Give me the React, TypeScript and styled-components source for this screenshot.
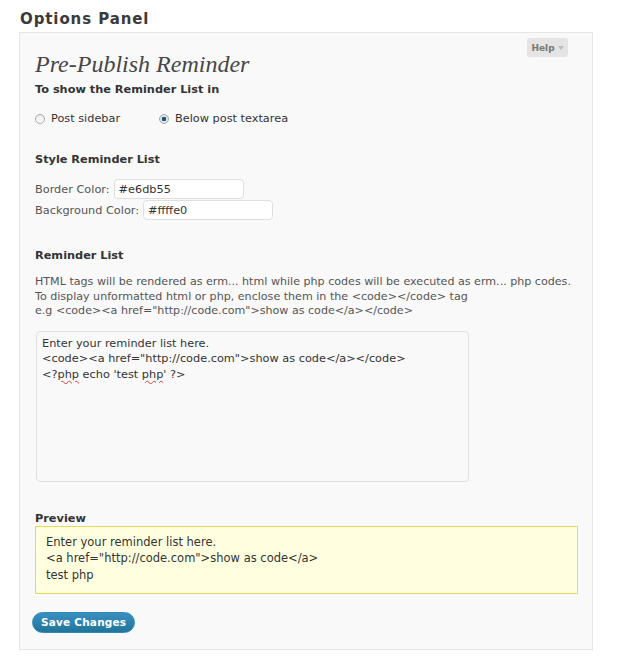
import React from "react";
import styled, { createGlobalStyle } from "styled-components";

const GlobalStyle = createGlobalStyle`
  body {
    margin: 0;
    background: #ffffff;
    font-family: "DejaVu Sans", Verdana, sans-serif;
    color: #333333;
  }
`;

const Page = styled.div`
  width: 620px;
  height: 666px;
  padding: 10px 0 0 19px;
  box-sizing: border-box;
`;

const PageTitle = styled.h2`
  margin: 0 0 0 1px;
  font-size: 15px;
  letter-spacing: 0.9px;
  line-height: 18px;
  font-weight: bold;
  color: #3a3a3a;
  height: 22px;
`;

const Panel = styled.div`
  position: relative;
  width: 574px;
  height: 618px;
  box-sizing: border-box;
  border: 1px solid #e6e6e6;
  background: #f9f9f9;
  padding: 16px 0 0 15px;
`;

const HelpTab = styled.div`
  position: absolute;
  top: 5px;
  right: 24px;
  width: 41px;
  height: 19px;
  box-sizing: border-box;
  background: #e4e4e4;
  border-radius: 3px;
  display: flex;
  align-items: center;
  justify-content: center;
  gap: 3px;
  font-size: 9px;
  font-weight: bold;
  color: #777777;
`;

const Arrow = styled.span`
  width: 0;
  height: 0;
  border-left: 3px solid transparent;
  border-right: 3px solid transparent;
  border-top: 4px solid #bbbbbb;
  margin-top: 1px;
`;

const Title = styled.h1`
  margin: 0;
  font-family: "Liberation Serif", Georgia, serif;
  font-style: italic;
  font-weight: normal;
  font-size: 24px;
  line-height: 30px;
  color: #464646;
`;

const Heading = styled.h3<{ $top: number }>`
  margin: ${(p) => p.$top}px 0 0 0;
  font-size: 11.3px;
  line-height: 14px;
  font-weight: bold;
  color: #333333;
`;

const RadioRow = styled.div`
  display: flex;
  align-items: center;
  margin-top: 15px;
  font-size: 11.3px;
  color: #333333;
`;

const RadioLabel = styled.label<{ $width: number }>`
  display: flex;
  align-items: center;
  gap: 6px;
  width: ${(p) => p.$width}px;
`;

const Radio = styled.span<{ $checked?: boolean }>`
  width: 10px;
  height: 10px;
  box-sizing: border-box;
  border-radius: 50%;
  border: 1px solid #a9a9a9;
  background: ${(p) =>
    p.$checked
      ? "radial-gradient(circle, #21587a 0 2px, #d8e4ec 2.5px)"
      : "linear-gradient(#e9e9e9, #ffffff)"};
`;

const FieldRow = styled.div<{ $top: number }>`
  display: flex;
  align-items: center;
  gap: 4px;
  margin-top: ${(p) => p.$top}px;
  font-size: 11.3px;
  color: #555555;
`;

const TextInput = styled.div`
  width: 130px;
  height: 20px;
  box-sizing: border-box;
  border: 1px solid #dfdfdf;
  border-radius: 4px;
  background: #ffffff;
  padding: 0 4px;
  display: flex;
  align-items: center;
  font-size: 11.3px;
  color: #333333;
`;

const Paragraph = styled.p`
  margin: 12px 0 0 0;
  font-size: 11.1px;
  line-height: 14.5px;
  color: #555555;
`;

const Textarea = styled.div`
  margin: 12px 0 0 1px;
  width: 433px;
  height: 151px;
  box-sizing: border-box;
  border: 1px solid #dfdfdf;
  border-radius: 4px;
  background: #f9f9f9;
  padding: 4px 5px;
  font-size: 11.3px;
  line-height: 15.5px;
  color: #333333;
`;

const Misspelled = styled.span`
  text-decoration: underline wavy #e04040;
  text-decoration-thickness: 1px;
  text-underline-offset: 2px;
`;

const PreviewBox = styled.div`
  margin-top: 0;
  width: 543px;
  height: 68px;
  box-sizing: border-box;
  border: 1px solid #e6db55;
  background: #ffffe0;
  padding: 7px 10px;
  font-size: 11.5px;
  line-height: 16.5px;
  color: #333333;
`;

const SaveButton = styled.button`
  margin: 18px 0 0 -3px;
  height: 21px;
  padding: 0 8px;
  border: 1px solid #298cba;
  border-radius: 11px;
  background: linear-gradient(#3a8fc0, #21759b);
  color: #ffffff;
  font-family: "DejaVu Sans", Verdana, sans-serif;
  font-size: 10.5px;
  font-weight: bold;
  letter-spacing: 0.2px;
`;

export default function App() {
  return (
    <>
      <GlobalStyle />
      <Page>
        <PageTitle>Options Panel</PageTitle>
        <Panel>
          <HelpTab>
            Help <Arrow />
          </HelpTab>
          <Title>Pre-Publish Reminder</Title>
          <Heading $top={4}>To show the Reminder List in</Heading>
          <RadioRow>
            <RadioLabel $width={124}>
              <Radio /> Post sidebar
            </RadioLabel>
            <RadioLabel $width={200}>
              <Radio $checked /> Below post textarea
            </RadioLabel>
          </RadioRow>
          <Heading $top={28}>Style Reminder List</Heading>
          <FieldRow $top={12}>
            Border Color: <TextInput>#e6db55</TextInput>
          </FieldRow>
          <FieldRow $top={1}>
            Background Color: <TextInput>#ffffe0</TextInput>
          </FieldRow>
          <Heading $top={29}>Reminder List</Heading>
          <Paragraph>
            HTML tags will be rendered as erm... html while php codes will be executed as erm... php codes.
            <br />
            To display unformatted html or php, enclose them in the &lt;code&gt;&lt;/code&gt; tag
            <br />
            e.g &lt;code&gt;&lt;a href="http://code.com"&gt;show as code&lt;/a&gt;&lt;/code&gt;
          </Paragraph>
          <Textarea>
            Enter your reminder list here.
            <br />
            &lt;code&gt;&lt;a href="http://code.com"&gt;show as code&lt;/a&gt;&lt;/code&gt;
            <br />
            &lt;?<Misspelled>php</Misspelled> echo 'test <Misspelled>php</Misspelled>' ?&gt;
          </Textarea>
          <Heading $top={30}>Preview</Heading>
          <PreviewBox>
            Enter your reminder list here.
            <br />
            &lt;a href="http://code.com"&gt;show as code&lt;/a&gt;
            <br />
            test php
          </PreviewBox>
          <SaveButton>Save Changes</SaveButton>
        </Panel>
      </Page>
    </>
  );
}
